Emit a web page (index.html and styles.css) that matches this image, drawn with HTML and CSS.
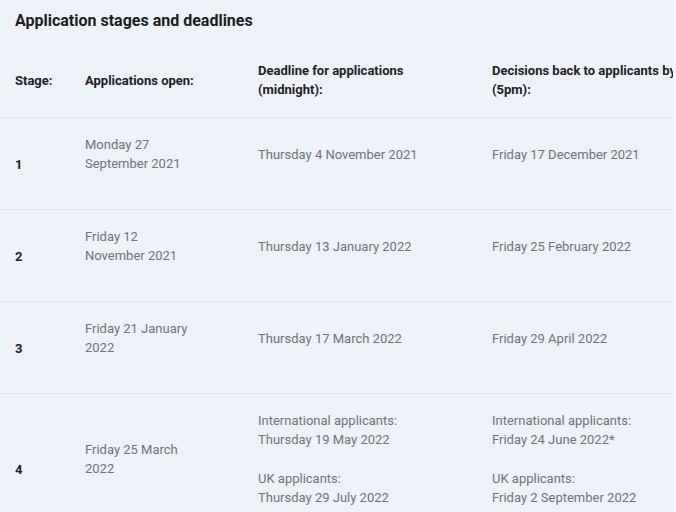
FILE: index.html
```html
<!DOCTYPE html>
<html lang="en">
<head>
<meta charset="utf-8">
<title>Application stages and deadlines</title>
<link rel="stylesheet" href="styles.css">
</head>
<body>
<section class="panel">
  <h2 class="title">Application stages and deadlines</h2>
  <table class="stages">
    <colgroup>
      <col class="c-stage">
      <col class="c-open">
      <col class="c-deadline">
      <col class="c-decision">
    </colgroup>
    <thead>
      <tr>
        <th>Stage:</th>
        <th>Applications open:</th>
        <th>Deadline for applications (midnight):</th>
        <th>Decisions back to applicants by (5pm):</th>
      </tr>
    </thead>
    <tbody>
      <tr>
        <td class="num">1</td>
        <td class="open"><p>Monday 27 September 2021</p></td>
        <td><p>Thursday 4 November 2021</p></td>
        <td><p>Friday 17 December 2021</p></td>
      </tr>
      <tr>
        <td class="num">2</td>
        <td class="open"><p>Friday 12 November 2021</p></td>
        <td><p>Thursday 13 January 2022</p></td>
        <td><p>Friday 25 February 2022</p></td>
      </tr>
      <tr>
        <td class="num">3</td>
        <td class="open"><p>Friday 21 January 2022</p></td>
        <td><p>Thursday 17 March 2022</p></td>
        <td><p>Friday 29 April 2022</p></td>
      </tr>
      <tr>
        <td class="num">4</td>
        <td class="open"><p>Friday 25 March 2022</p></td>
        <td><p>International applicants:<br>Thursday 19 May 2022</p><p>UK applicants:<br>Thursday 29 July 2022</p></td>
        <td><p>International applicants:<br>Friday 24 June 2022*</p><p>UK applicants:<br>Friday 2 September 2022</p></td>
      </tr>
    </tbody>
  </table>
</section>
</body>
</html>
```

FILE: styles.css
```css
html, body {
  margin: 0;
  padding: 0;
}

body {
  background: #f6f7fb;
  width: 676px;
  height: 512px;
  overflow: hidden;
  font-family: Roboto, "Liberation Sans", Arial, sans-serif;
}

.panel {
  width: 673px;
  height: 512px;
  overflow: hidden;
  background: #edf1f8;
}

.title {
  margin: 0 0 8px;
  padding: 9px 15px 0;
  font-size: 16px;
  line-height: 24px;
  font-weight: 700;
  color: #1b1c1e;
  white-space: nowrap;
}

.stages {
  border-collapse: collapse;
  table-layout: fixed;
  width: 720px;
  font-size: 13px;
  line-height: 19px;
}

.c-stage { width: 70px; }
.c-open { width: 173px; }
.c-deadline { width: 234px; }
.c-decision { width: 243px; }

.stages th {
  text-align: left;
  vertical-align: middle;
  font-weight: 700;
  color: #202124;
  padding: 20px 35px 18px 15px;
  border-bottom: 1px solid #dfe3ea;
}

.stages th:first-child {
  padding-right: 5px;
}

.stages td {
  vertical-align: middle;
  color: #6f7378;
  padding: 17px 35px 16px 15px;
  border-bottom: 1px solid #dfe3ea;
}

.stages td p {
  margin: 0 0 20px;
}

.stages td.open {
  padding-right: 55px;
}

.stages td.num {
  font-weight: 700;
  color: #202124;
  padding-right: 5px;
}
```
